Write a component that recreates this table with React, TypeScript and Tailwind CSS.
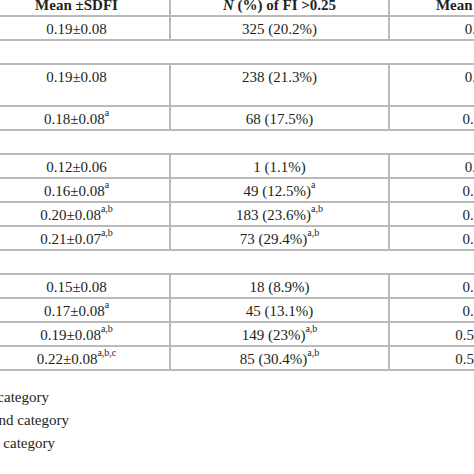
type Cell = { v: string; s?: string };
type Row =
  | { group: string }
  | { label: string; c1: Cell; c2: Cell; c3: Cell; tall?: boolean };

const rows: Row[] = [
  { label: "Total", c1: { v: "0.19±0.08" }, c2: { v: "325 (20.2%)" }, c3: { v: "0.48±0.19" } },
  { group: "Sex" },
  { label: "Female", c1: { v: "0.19±0.08" }, c2: { v: "238 (21.3%)" }, c3: { v: "0.49±0.18" }, tall: true },
  { label: "Male", c1: { v: "0.18±0.08", s: "a" }, c2: { v: "68 (17.5%)" }, c3: { v: "0.52±0.19", s: "a" } },
  { group: "Age group" },
  { label: "60–69", c1: { v: "0.12±0.06" }, c2: { v: "1 (1.1%)" }, c3: { v: "0.38±0.15" } },
  { label: "70–79", c1: { v: "0.16±0.08", s: "a" }, c2: { v: "49 (12.5%)", s: "a" }, c3: { v: "0.45±0.17", s: "a" } },
  { label: "80–89", c1: { v: "0.20±0.08", s: "a,b" }, c2: { v: "183 (23.6%)", s: "a,b" }, c3: { v: "0.54±0.18", s: "a" } },
  { label: "≥90", c1: { v: "0.21±0.07", s: "a,b" }, c2: { v: "73 (29.4%)", s: "a,b" }, c3: { v: "0.56±0.19", s: "a" } },
  { group: "Education" },
  { label: "None", c1: { v: "0.15±0.08" }, c2: { v: "18 (8.9%)" }, c3: { v: "0.28±0.14", s: "a" } },
  { label: "Primary", c1: { v: "0.17±0.08", s: "a" }, c2: { v: "45 (13.1%)" }, c3: { v: "0.46±0.17", s: "a" } },
  { label: "Secondary", c1: { v: "0.19±0.08", s: "a,b" }, c2: { v: "149 (23%)", s: "a,b" }, c3: { v: "0.51±0.18", s: "a,b,c" } },
  { label: "Tertiary", c1: { v: "0.22±0.08", s: "a,b,c" }, c2: { v: "85 (30.4%)", s: "a,b" }, c3: { v: "0.50±0.19", s: "a,b,c" } },
];

const notes = [
  { k: "a", t: "Significant difference compared to the first category", w: "w-[265px]" },
  { k: "b", t: "Significant difference compared to the second category", w: "w-[285px]" },
  { k: "c", t: "Significant difference compared to the third category", w: "w-[271px]" },
];

function Val({ c }: { c: Cell }) {
  return (
    <span className="whitespace-nowrap">
      {c.v}
      {c.s && <sup className="text-[10px] leading-none align-[3px]">{c.s}</sup>}
    </span>
  );
}

const grid = "grid grid-cols-[200px_185px_219px_212px_200px] border-b-2 border-[#b9b9b9]";
const cell = "pt-[3px] pb-px leading-[18px] text-center";

export default function App() {
  return (
    <div
      className="w-[474px] h-[474px] overflow-hidden bg-white text-[#231f20] text-[15px]"
      style={{ fontFamily: '"Liberation Serif", "Times New Roman", serif' }}
    >
      <div className="-ml-[216px] -mt-[7px] w-[1016px]">
        <div className={`${grid} h-[24px] font-bold`}>
          <div className={`${cell} text-left pl-2 border-r-2 border-[#b9b9b9]`}>Variable</div>
          <div className={cell}>Mean ±SDFI</div>
          <div className={`${cell} border-l-2 border-[#b9b9b9]`}>
            <span className="italic">N</span> (%) of FI &gt;0.25
          </div>
          <div className={`${cell} border-l-2 border-[#b9b9b9]`}>Mean ±SD MMSE</div>
          <div className={`${cell} border-l-2 border-[#b9b9b9]`}></div>
        </div>
        {rows.map((r, i) =>
          "group" in r ? (
            <div key={i} className="h-[24px] border-b-2 border-[#b9b9b9] pt-[3px] pl-2 leading-[18px]">
              {r.group}
            </div>
          ) : (
            <div key={i} className={`${grid} ${r.tall ? "h-[42px]" : "h-[24px]"}`}>
              <div className={`${cell} text-left pl-4 border-r-2 border-[#b9b9b9]`}>{r.label}</div>
              <div className={cell}>
                <Val c={r.c1} />
              </div>
              <div className={`${cell} border-l-2 border-[#b9b9b9]`}>
                <Val c={r.c2} />
              </div>
              <div className={`${cell} border-l-2 border-[#b9b9b9]`}>
                <Val c={r.c3} />
              </div>
              <div className={`${cell} border-l-2 border-[#b9b9b9]`}></div>
            </div>
          )
        )}
        <div className="mt-[15px] leading-[23px]">
          {notes.map((n) => (
            <div key={n.k} className={`${n.w} flex justify-end`}>
              <span className="whitespace-nowrap shrink-0">
                <sup className="text-[10px]">{n.k}</sup>
                {n.t}
              </span>
            </div>
          ))}
        </div>
      </div>
    </div>
  );
}
